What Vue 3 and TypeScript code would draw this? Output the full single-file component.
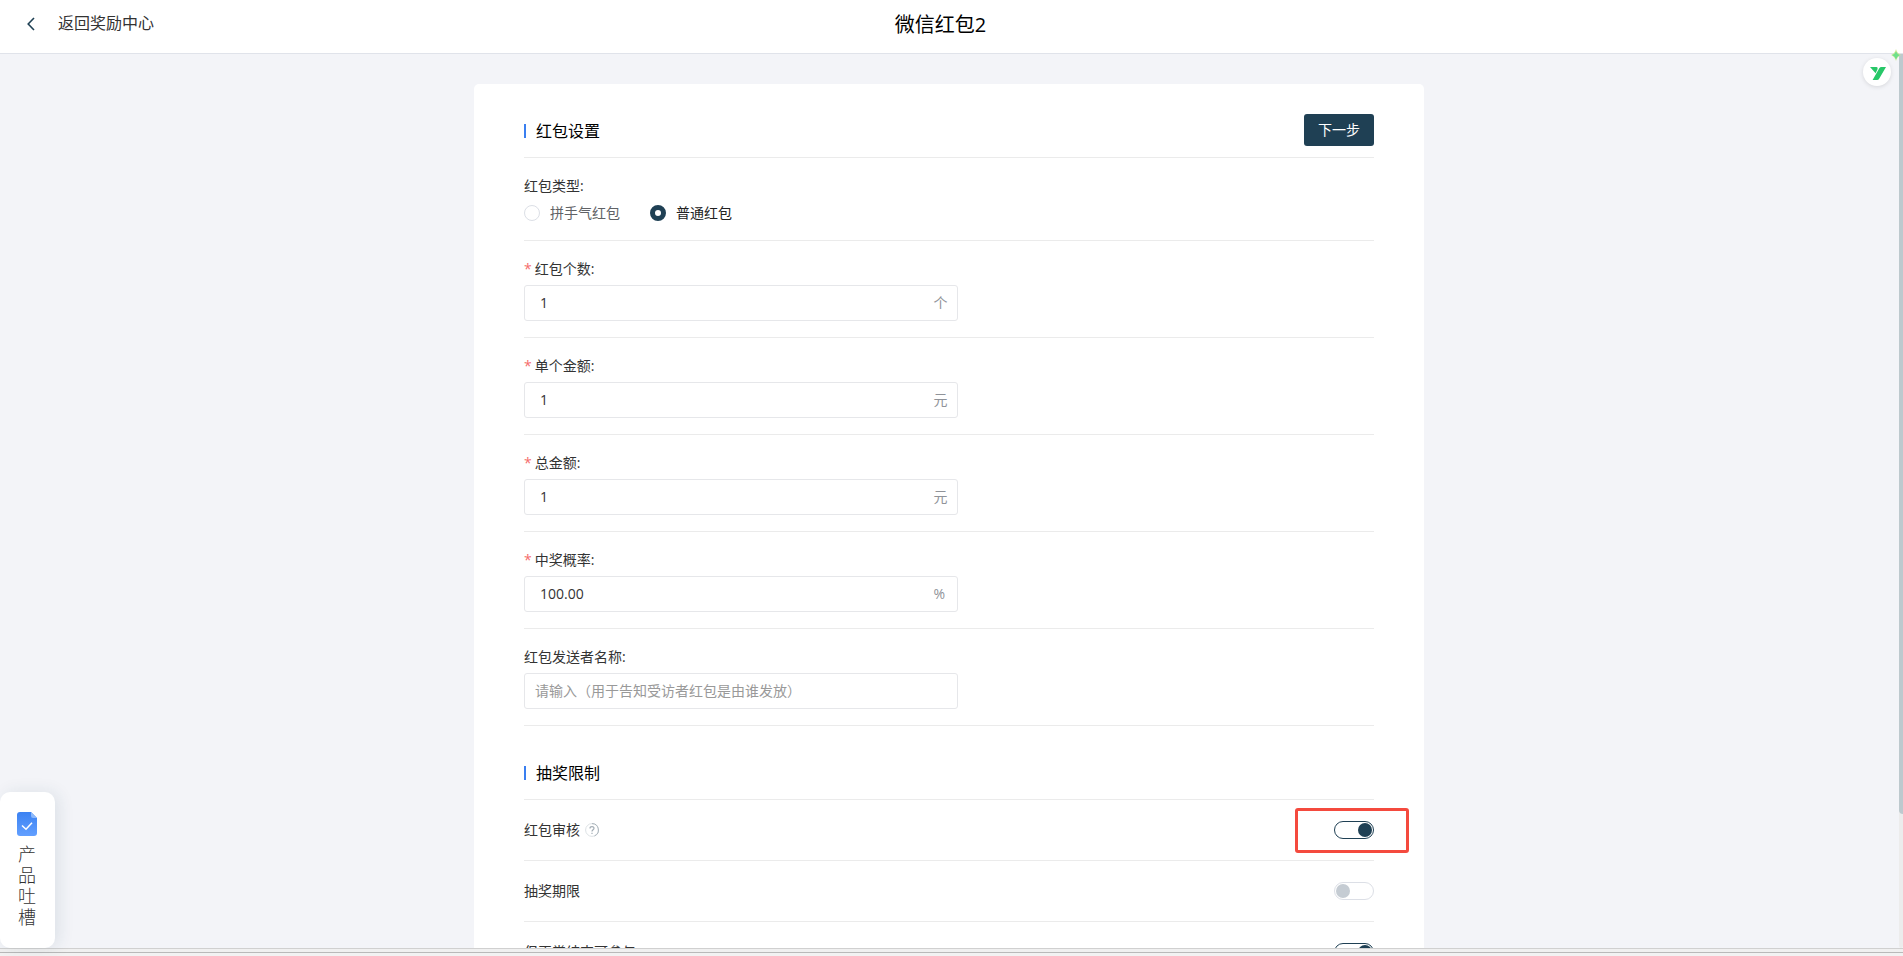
<script setup lang="ts">
import { reactive, ref } from 'vue'

interface Field {
  id: string
  label: string
  unit?: string
  required: boolean
  placeholder?: string
  value: string
}

interface Limit {
  id: string
  label: string
  help?: boolean
  marked?: boolean
  on: boolean
}

const kind = ref<'lucky' | 'normal'>('normal')

const fields = reactive<Field[]>([
  { id: 'count', label: '红包个数:', unit: '个', required: true, value: '1' },
  { id: 'single', label: '单个金额:', unit: '元', required: true, value: '1' },
  { id: 'total', label: '总金额:', unit: '元', required: true, value: '1' },
  { id: 'rate', label: '中奖概率:', unit: '%', required: true, value: '100.00' },
  {
    id: 'sender',
    label: '红包发送者名称:',
    required: false,
    placeholder: '请输入（用于告知受访者红包是由谁发放）',
    value: '',
  },
])

const limits = reactive<Limit[]>([
  { id: 'review', label: '红包审核', help: true, marked: true, on: true },
  { id: 'period', label: '抽奖期限', on: false },
  { id: 'finished', label: '但正常结束可参与', on: true },
])
</script>

<template>
  <div class="page">
    <header class="top">
      <a class="back" href="#">
        <svg class="chevron" viewBox="0 0 8 14" aria-hidden="true"><path d="M7 1 1.200 7 7 13" /></svg>
        <span>返回奖励中心</span>
      </a>
      <h1>微信红包2</h1>
    </header>

    <main class="viewport">
      <form class="card" @submit.prevent>
        <div class="head">
          <h2>红包设置</h2>
          <button class="next" type="submit">下一步</button>
        </div>

        <fieldset class="kinds">
          <legend>红包类型:</legend>
          <div class="options">
            <label><input v-model="kind" type="radio" name="kind" value="lucky" /><span>拼手气红包</span></label>
            <label><input v-model="kind" type="radio" name="kind" value="normal" /><span>普通红包</span></label>
          </div>
        </fieldset>

        <div v-for="f in fields" :key="f.id" class="field">
          <label :for="f.id"><span v-if="f.required" class="star">*</span>{{ f.label }}</label>
          <div class="box" :class="{ numeric: f.unit }">
            <input :id="f.id" v-model="f.value" type="text" :placeholder="f.placeholder" />
            <span v-if="f.unit" class="unit">{{ f.unit }}</span>
          </div>
        </div>

        <div class="head second">
          <h2>抽奖限制</h2>
        </div>

        <div v-for="l in limits" :key="l.id" class="limit">
          <label :for="l.id">{{ l.label }}</label>
          <svg v-if="l.help" class="help" viewBox="0 0 14 14" aria-hidden="true">
            <circle cx="7" cy="7" r="6.400" />
            <path class="arc" d="M7 .6A6.400 6.400 0 0 1 9.500 12.900" />
            <path class="mark" d="M5 5.400C5 3 9 3 9 5.300 9 6.800 7 6.700 7 8.500M7 9.800v1.100" />
          </svg>
          <span class="toggle" :class="{ marked: l.marked }">
            <input :id="l.id" v-model="l.on" type="checkbox" role="switch" />
          </span>
        </div>
      </form>
      <div class="track"><div class="thumb"></div></div>
    </main>

    <footer class="edge"></footer>

    <button class="feedback" type="button">
      <svg viewBox="0 0 20 24" aria-hidden="true">
        <defs>
          <linearGradient id="sheet" x1="0" y1="0" x2="0" y2="1">
            <stop offset="0" stop-color="#3b82f2" />
            <stop offset="1" stop-color="#629fff" />
          </linearGradient>
        </defs>
        <path fill="url(#sheet)" d="M3 0h11l6 6v15a3 3 0 0 1-3 3H3a3 3 0 0 1-3-3V3a3 3 0 0 1 3-3z" />
        <path fill="#8db9fb" d="M14 0v4a2 2 0 0 0 2 2h4z" />
        <path fill="none" stroke="#fff" stroke-width="1.500" d="m5 13.500 4 3.800 6-6.600" />
      </svg>
      <span>产品吐槽</span>
    </button>

    <button class="assistant" type="button" aria-label="助手">
      <svg viewBox="0 0 16 13" aria-hidden="true">
        <path d="M0 0h6.500Q8 0 7.600 2L5.600 6.300zM9.300 1.200Q10 0 11.400 0H16L9.300 11.500Q8.500 13 7 13H2.600z" />
      </svg>
    </button>
    <svg class="spark" viewBox="0 0 10 12" aria-hidden="true">
      <path fill="#d3e99a" d="M5 0Q6.200 4.500 10 6 6.200 7.500 5 12 3.800 7.500 0 6 3.800 4.500 5 0z" />
      <path fill="#6fe08a" d="M5 2.500Q6 5 9 6 6 7 5 10.500 4 7 1 6 4 5 5 2.500z" />
    </svg>
  </div>
</template>

<style>
html,
body {
  margin: 0;
  overflow: hidden;
}
</style>

<style scoped>
* {
  box-sizing: border-box;
}

.page {
  position: relative;
  display: flex;
  flex-direction: column;
  height: 100vh;
  background: #f3f4f8;
  color: #333;
  font: 14px/20px 'Open Sans', 'Noto Sans CJK SC', sans-serif;
}

button,
input {
  font: inherit;
}

.top {
  display: grid;
  flex: none;
  grid-template-columns: 1fr auto 1fr;
  height: 54px;
  padding: 0 22px 4px 0;
  align-items: center;
  background: #fff;
  border-bottom: 1px solid #e0e3ea;
}

.back {
  display: flex;
  align-items: center;
  gap: 23px;
  padding: 0 0 2px 27px;
  color: #333;
  font-size: 16px;
  text-decoration: none;
}

.back span {
  padding-bottom: 2px;
}

.chevron {
  width: 8px;
  height: 14px;
  fill: none;
  stroke: #1f4054;
  stroke-width: 1.600;
}

h1,
h2 {
  margin: 0;
  color: #000;
  font-weight: 400;
}

h1 {
  font-size: 20px;
}

.viewport {
  position: relative;
  flex: 1;
  min-height: 0;
  padding: 30px 5px 0 0;
  overflow: hidden;
}

.card {
  width: 950px;
  max-width: 100%;
  margin: 0 auto;
  padding: 30px 50px;
  background: #fff;
  border-radius: 5px;
}

.head {
  display: flex;
  align-items: center;
  justify-content: space-between;
  min-height: 44px;
  padding-bottom: 11px;
  border-bottom: 1px solid #ebebeb;
}

.second {
  margin-top: 30px;
}

h2 {
  display: flex;
  align-items: center;
  gap: 10px;
  padding-top: 2px;
  font-size: 16px;
}

h2::before {
  width: 2px;
  height: 14px;
  background: #3a7ff0;
  content: '';
}

.next {
  width: 70px;
  height: 32px;
  padding: 0;
  border: 0;
  border-radius: 3px;
  background: #1f4054;
  color: #fff;
}

.kinds {
  min-width: 0;
  margin: 0;
  padding: 18px 0 17px;
  border: 0;
  border-bottom: 1px solid #ebebeb;
}

.kinds legend {
  float: left;
  width: 100%;
  padding: 0;
}

.options {
  display: flex;
  clear: both;
  gap: 30px;
  padding-top: 7px;
}

.options label {
  display: flex;
  align-items: center;
  gap: 10px;
  color: #606266;
}

.options label:has(:checked) {
  color: #222;
}

.options input {
  width: 16px;
  height: 16px;
  margin: 0;
  appearance: none;
  border: 1px solid #dcdfe6;
  border-radius: 50%;
  background: #fff;
}

.options input:checked {
  border: 5px solid #1f4054;
}

.field {
  padding: 18px 0 16px;
  border-bottom: 1px solid #ebebeb;
}

.field label {
  display: block;
  height: 26px;
}

.star {
  margin-right: 3px;
  color: #f56c6c;
}

.box {
  display: flex;
  align-items: center;
  width: 51%;
  height: 36px;
  padding: 0 9px 0 10px;
  border: 1px solid #e6e7ea;
  border-radius: 3px;
}

.box.numeric {
  padding-left: 15px;
}

.box input {
  flex: 1;
  min-width: 0;
  padding: 0;
  border: 0;
  outline: 0;
  background: none;
  color: #333;
}

.box input::placeholder {
  color: #999;
  opacity: 1;
}

.unit {
  width: 14px;
  color: #909399;
}

.limit {
  display: flex;
  align-items: center;
  gap: 5px;
  height: 61px;
  border-bottom: 1px solid #ebebeb;
}

.help {
  width: 14px;
  height: 14px;
  fill: none;
  stroke: #dde2e5;
  stroke-width: 1;
}

.help .arc {
  stroke: #aab4bb;
}

.help .mark {
  stroke: #a3adb5;
  stroke-width: 1.200;
}

.toggle {
  position: relative;
  display: flex;
  margin-left: auto;
}

.toggle.marked::after {
  position: absolute;
  inset: -13px -35px -14px -39px;
  border: 3px solid #f44a3e;
  border-radius: 3px;
  content: '';
  pointer-events: none;
}

.toggle input {
  display: flex;
  align-items: center;
  width: 40px;
  height: 18px;
  margin: 0;
  padding: 0 1px;
  appearance: none;
  border: 1px solid #dcdfe6;
  border-radius: 9px;
  background: #fff;
}

.toggle input::before {
  width: 14px;
  height: 14px;
  border-radius: 50%;
  background: #c5ccd3;
  content: '';
}

.toggle input:checked {
  justify-content: flex-end;
  border-color: #1f4054;
}

.toggle input:checked::before {
  background: #1f4054;
}

.track {
  position: absolute;
  top: 0;
  right: 0;
  bottom: 0;
  width: 4px;
  border-radius: 4px;
  background: #ececec;
}

.thumb {
  height: 85%;
  border-radius: 0 0 0 4px;
  background: #bdc9ce;
}

.edge {
  flex: none;
  height: 8px;
  border-top: 1px solid #d0d0d0;
  background: linear-gradient(#f0f0f0 3px, #b9b9b9 3px, #b9b9b9 4px, #f2f2f2 4px);
}

.feedback {
  position: absolute;
  bottom: 8px;
  left: 0;
  display: flex;
  flex-direction: column;
  align-items: center;
  gap: 8px;
  width: 55px;
  padding: 20px 18px 20px 17px;
  border: 0;
  border-radius: 10px;
  background: #fff;
  box-shadow: 4px 0 16px rgb(31 64 84 / 10%);
  color: #333;
  font-size: 18px;
  font-weight: 300;
  line-height: 21px;
}

.feedback svg {
  width: 20px;
  height: 24px;
}

.feedback span {
  width: 18px;
}

.assistant {
  position: absolute;
  top: 58px;
  right: 12px;
  display: flex;
  align-items: center;
  justify-content: center;
  width: 28px;
  height: 28px;
  padding: 2px 0 0 2px;
  border: 0;
  border-radius: 50%;
  background: #fff;
  box-shadow: 0 1px 4px rgb(0 0 0 / 12%);
}

.assistant svg {
  width: 16px;
  height: 13px;
  fill: #27c768;
}

.spark {
  position: absolute;
  top: 49px;
  right: 2px;
  width: 10px;
  height: 12px;
}
</style>
